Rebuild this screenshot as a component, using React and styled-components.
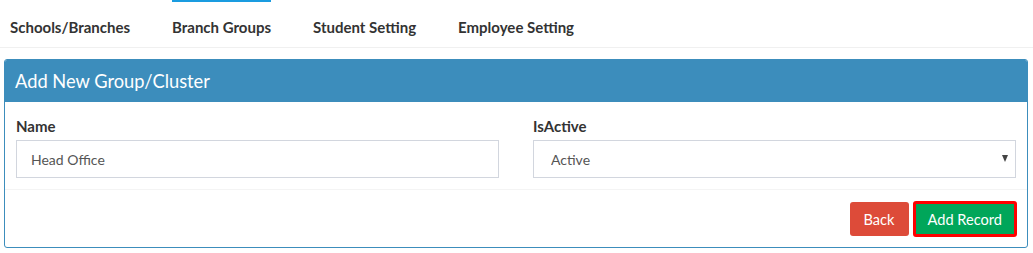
import React from 'react';
import styled, { createGlobalStyle } from 'styled-components';

const GlobalStyle = createGlobalStyle`
    body {
        margin: 0;
        background: #ffffff;
        font-family: "Lato", "Open Sans", sans-serif;
        color: #333;
    }
`;

const Page = styled.div`
    width: 1033px;
    padding: 0 5px 0 4px;
    box-sizing: border-box;
`;

const TabBar = styled.nav`
    display: flex;
    gap: 42px;
    height: 47px;
    border-bottom: 1px solid #f0f0f0;
    margin: 0 -5px 0 -4px;
    padding-left: 10px;
`;

const Tab = styled.a`
    display: flex;
    align-items: center;
    border-top: 2px solid ${p => (p.active ? '#1a9ce0' : 'transparent')};
    font-size: 15px;
    font-weight: 700;
    color: #333;
    text-decoration: none;
    padding-top: 4px;
    cursor: pointer;
`;

const Panel = styled.div`
    margin-top: 11px;
    border: 1px solid #3c8dbc;
    border-radius: 3px;
    overflow: hidden;
`;

const PanelHead = styled.div`
    height: 42px;
    display: flex;
    align-items: center;
    padding-left: 10px;
    background: #3c8dbc;
    color: #fff;
    font-size: 18.3px;
`;

const PanelBody = styled.div`
    display: grid;
    grid-template-columns: 1fr 1fr;
    column-gap: 34px;
    padding: 15px 11px 11px 11px;
    border-bottom: 1px solid #f4f4f4;
`;

const Field = styled.div`
    display: flex;
    flex-direction: column;
`;

const Label = styled.label`
    font-size: 15px;
    font-weight: 700;
    color: #333;
    margin-bottom: 5px;
    line-height: 18px;
`;

const TextInput = styled.input`
    height: 38px;
    box-sizing: border-box;
    border: 1px solid #d2d6de;
    padding: 0 14px;
    font-family: inherit;
    font-size: 14px;
    color: #555;
    outline: none;
`;

const SelectWrap = styled.div`
    position: relative;
`;

const Select = styled.select`
    width: 100%;
    height: 38px;
    box-sizing: border-box;
    border: 1px solid #d2d6de;
    border-radius: 0;
    background: #fff;
    padding: 0 17px;
    font-family: inherit;
    font-size: 14px;
    color: #555;
    appearance: none;
    outline: none;
`;

const Caret = styled.span`
    position: absolute;
    right: 8px;
    top: 15px;
    width: 0;
    height: 0;
    border-left: 3.5px solid transparent;
    border-right: 3.5px solid transparent;
    border-top: 7px solid #444;
    pointer-events: none;
`;

const Footer = styled.div`
    display: flex;
    justify-content: flex-end;
    align-items: center;
    gap: 4px;
    padding: 11px 10px 10px;
`;

const Button = styled.button`
    height: ${p => (p.outlined ? '36px' : '34px')};
    padding: 0 ${p => (p.outlined ? '12px' : '14px')};
    border: ${p => (p.outlined ? '3px solid #ff0000' : 'none')};
    border-radius: 3px;
    background: ${p => p.bg};
    color: #fff;
    font-family: inherit;
    font-size: 14.6px;
    cursor: pointer;
`;

export default function App() {
    return (
        <Page>
            <GlobalStyle />
            <TabBar>
                <Tab>Schools/Branches</Tab>
                <Tab active>Branch Groups</Tab>
                <Tab>Student Setting</Tab>
                <Tab>Employee Setting</Tab>
            </TabBar>
            <Panel>
                <PanelHead>Add New Group/Cluster</PanelHead>
                <PanelBody>
                    <Field>
                        <Label>Name</Label>
                        <TextInput defaultValue="Head Office" />
                    </Field>
                    <Field>
                        <Label>IsActive</Label>
                        <SelectWrap>
                            <Select defaultValue="1">
                                <option value="1">Active</option>
                                <option value="0">Inactive</option>
                            </Select>
                            <Caret />
                        </SelectWrap>
                    </Field>
                </PanelBody>
                <Footer>
                    <Button bg="#dd4b39">Back</Button>
                    <Button bg="#00a65a" outlined>Add Record</Button>
                </Footer>
            </Panel>
        </Page>
    );
}
